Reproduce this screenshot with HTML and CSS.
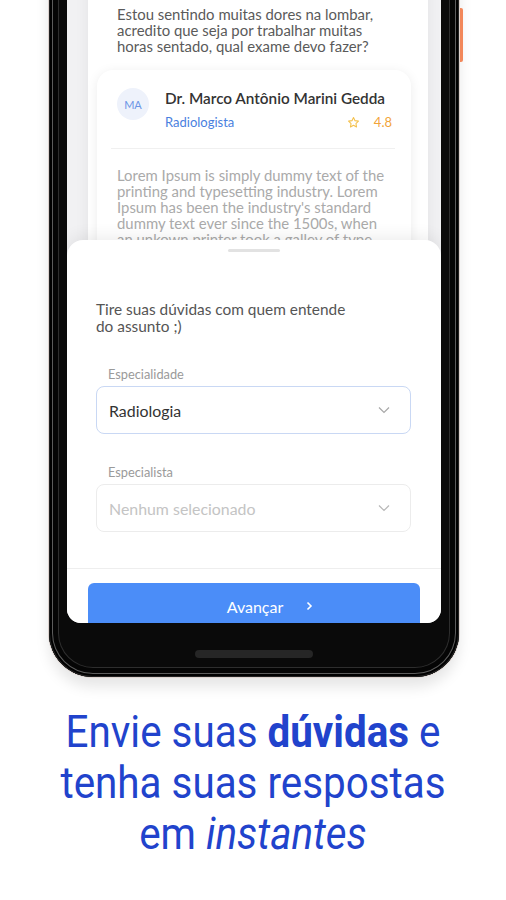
FILE: index.html
```html
<!DOCTYPE html>
<html lang="pt-BR">
<head>
  <meta charset="UTF-8" />
  <link rel="stylesheet" href="styles.css">
</head>
<body>
  <div class="phone">
    <span class="side-button"></span>
    <div class="screen">
      <div class="question-card">
        <p class="question">Estou sentindo muitas dores na lombar, acredito que seja por trabalhar muitas horas sentado, qual exame devo fazer?</p>

        <div class="answer-card">
          <div class="doctor">
            <div class="avatar">MA</div>
            <div class="doctor-info">
              <div class="doctor-name">Dr. Marco Antônio Marini Gedda</div>
              <div class="doctor-meta">
                <span class="specialty">Radiologista</span>
                <span class="rating">
                  <svg width="13" height="13" viewBox="0 0 24 24" fill="none" stroke="#f4c14d" stroke-width="2" stroke-linejoin="round">
                    <path d="M12 2.8l2.8 5.8 6.3.9-4.6 4.4 1.1 6.3L12 17.2l-5.6 3 1.1-6.3-4.6-4.4 6.3-.9z"/>
                  </svg>
                  <span class="score">4.8</span>
                </span>
              </div>
            </div>
          </div>
          <div class="divider"></div>
          <p class="answer">Lorem Ipsum is simply dummy text of the printing and typesetting industry. Lorem Ipsum has been the industry's standard dummy text ever since the 1500s, when an unkown printer took a galley of type and scrambled it to make a type specimen book.</p>
        </div>
      </div>

      <div class="sheet">
        <div class="handle"></div>
        <p class="sheet-title">Tire suas dúvidas com quem entende<br>do assunto ;)</p>

        <label class="field-label">Especialidade</label>
        <div class="select active">
          <span>Radiologia</span>
          <svg width="12" height="8" viewBox="0 0 12 8" fill="none" stroke="#a8a8a8" stroke-width="1.2"><path d="M1 1.5l5 5 5-5"/></svg>
        </div>

        <label class="field-label">Especialista</label>
        <div class="select empty">
          <span>Nenhum selecionado</span>
          <svg width="12" height="8" viewBox="0 0 12 8" fill="none" stroke="#b8b8b8" stroke-width="1.2"><path d="M1 1.5l5 5 5-5"/></svg>
        </div>

        <div class="sheet-footer">
          <button class="next-btn">
            Avançar
            <svg width="8" height="10" viewBox="0 0 8 10" fill="none" stroke="#fff" stroke-width="1.6"><path d="M2.5 1.5l3.5 3.5-3.5 3.5"/></svg>
          </button>
        </div>
      </div>
    </div>
    <div class="home-bar"></div>
  </div>

  <h1 class="caption">Envie suas <strong>dúvidas</strong> e<br>tenha suas respostas<br>em <em>instantes</em></h1>
</body>
</html>
```

FILE: styles.css
```css
body {
  margin: 0;
  background: #fff;
  font-family: 'Lato', 'Noto Sans', sans-serif;
  overflow: hidden;
}

.phone {
  position: relative;
  width: 410px;
  margin: -30px 0 0 49px;
  padding: 0 18px;
  box-sizing: border-box;
  background: #0a0a0a;
  border-radius: 0 0 44px 44px;
  box-shadow:
    0 0 0 1px #ddd3cf,
    inset 0 0 0 1px #222,
    inset 0 0 0 3px #000,
    inset 0 0 0 4px #5c5c5c,
    inset 0 0 0 9px #050505,
    inset 0 0 0 10px #2e2e2e,
    0 10px 14px rgba(0, 0, 0, 0.10);
}

.side-button {
  position: absolute;
  right: -4px;
  top: 38px;
  width: 3px;
  height: 54px;
  background: #f2875a;
  border-radius: 0 2px 2px 0;
}

.screen {
  position: relative;
  height: 653px;
  background: #f1f1f3;
  border-radius: 0 0 14px 14px;
  overflow: hidden;
}

/* conteúdo por trás do painel */
.question-card {
  margin-left: 21px;
  width: 340px;
  height: 100%;
  background: #fff;
  box-shadow: 0 0 14px rgba(0, 0, 0, 0.06);
  padding-top: 36px;
  box-sizing: border-box;
}

.question {
  margin: 0 0 16px;
  padding-left: 29px;
  font-size: 14.9px;
  line-height: 16px;
  color: #5a5a5a;
  width: 268px;
}

.answer-card {
  margin: 0 17px 0 9px;
  background: #fff;
  border-radius: 16px;
  box-shadow: 0 2px 12px rgba(0, 0, 0, 0.08);
  padding: 18px 16px 20px 20px;
}

.doctor {
  display: flex;
  align-items: flex-start;
  gap: 16px;
}

.avatar {
  width: 32px;
  height: 32px;
  border-radius: 50%;
  background: #eef2fb;
  color: #6a95e6;
  font-size: 11px;
  display: flex;
  align-items: center;
  justify-content: center;
  flex-shrink: 0;
}

.doctor-info {
  flex: 1;
}

.doctor-name {
  font-size: 15.3px;
  line-height: 20px;
  color: #333;
  font-weight: 600;
}

.doctor-meta {
  display: flex;
  justify-content: space-between;
  align-items: center;
  margin-top: 6px;
}

.specialty {
  font-size: 13px;
  color: #4a7fe0;
}

.rating {
  display: flex;
  align-items: center;
  gap: 14px;
  padding-right: 3px;
}

.score {
  font-size: 13px;
  color: #f2a43a;
}

.divider {
  height: 1px;
  background: #f0f0f0;
  margin: 18px 0 18px -6px;
}

.answer {
  margin: 0;
  font-size: 14.9px;
  line-height: 16px;
  color: #aaa;
  width: 274px;
}

/* painel inferior */
.sheet {
  position: absolute;
  left: 0;
  right: 0;
  top: 270px;
  bottom: 0;
  background: #fff;
  border-radius: 16px 16px 0 0;
  box-shadow: 0 -4px 16px rgba(0, 0, 0, 0.07);
  padding: 0 30px 0 29px;
}

.handle {
  width: 52px;
  height: 3px;
  background: #e2e2e2;
  border-radius: 2px;
  margin: 9px auto 0;
}

.sheet-title {
  margin: 49px 0 32px;
  font-size: 15.4px;
  line-height: 17px;
  color: #555;
}

.field-label {
  display: block;
  padding-left: 12px;
  font-size: 12.8px;
  line-height: 14px;
  color: #9a9a9a;
  margin-bottom: 5px;
}

.select {
  height: 48px;
  box-sizing: border-box;
  border-radius: 8px;
  display: flex;
  align-items: center;
  justify-content: space-between;
  padding: 0 20px 0 12px;
  font-size: 15.9px;
  margin-bottom: 31px;
}

.select.active {
  border: 1px solid #c9d8f4;
  color: #333;
}

.select.empty {
  border: 1px solid #ececec;
  color: #c4c4c4;
}

.sheet-footer {
  position: absolute;
  left: 0;
  right: 0;
  top: 328px;
  border-top: 1px solid #eeeeee;
  padding: 14px 21px 0;
}

.next-btn {
  width: 100%;
  height: 46px;
  border: none;
  border-radius: 6px;
  background: #4b8df8;
  color: #fff;
  font-family: inherit;
  font-size: 16px;
  display: flex;
  align-items: center;
  justify-content: center;
  gap: 22px;
  padding-left: 38px;
}

.home-bar {
  width: 118px;
  height: 8px;
  border-radius: 4px;
  background: #262626;
  margin: 27px auto 0;
}

.phone::after {
  content: "";
  display: block;
  height: 19px;
}

.caption {
  margin: 29px 0 0;
  text-align: center;
  font-family: 'Roboto', sans-serif;
  font-weight: 400;
  font-size: 45px;
  line-height: 51px;
  color: #2143cc;
  transform: scaleX(0.897);
}

.caption strong {
  font-weight: 700;
}

.caption em {
  font-style: italic;
}
```
